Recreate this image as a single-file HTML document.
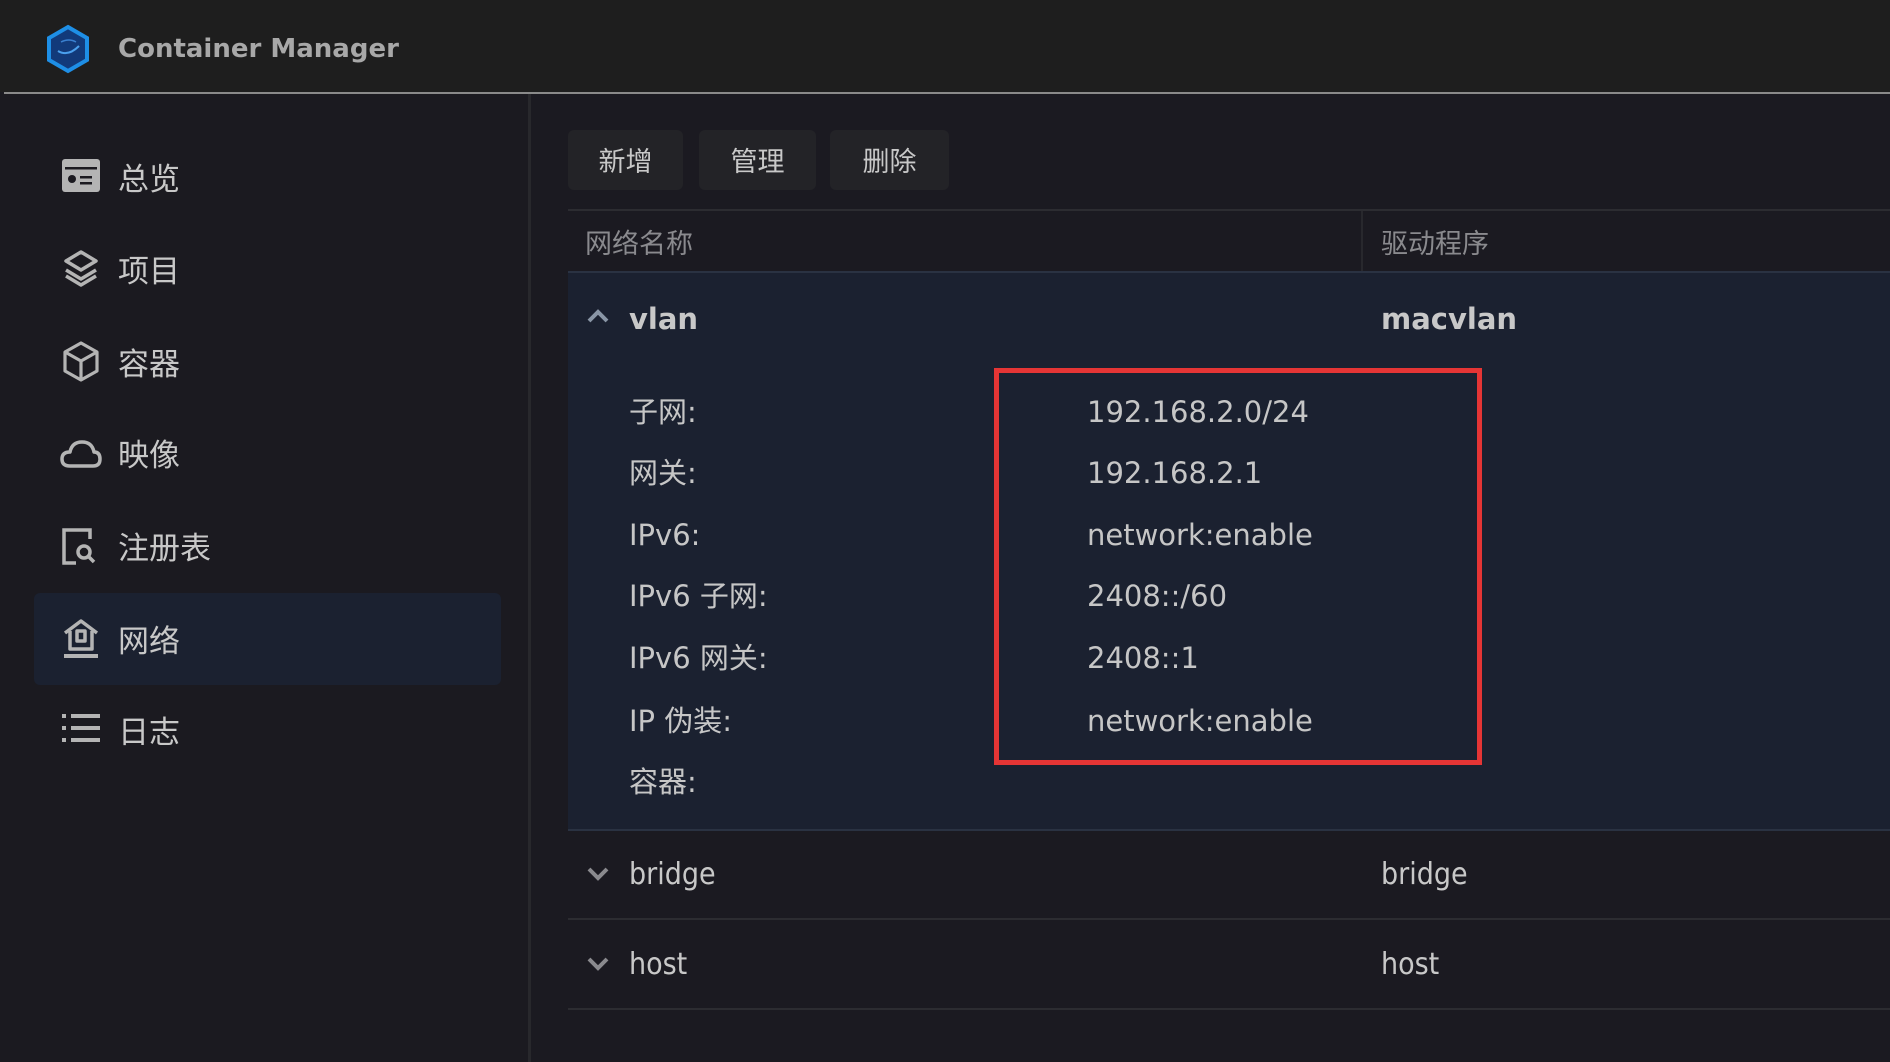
<!DOCTYPE html>
<html><head><meta charset="utf-8"><style>
*{margin:0;padding:0;box-sizing:border-box}
body{width:1890px;height:1062px;overflow:hidden;background:#1b1a21;font-family:"DejaVu Sans","Liberation Sans","Noto Sans CJK SC",sans-serif;color:#c8c8c8;position:relative}
.a{position:absolute}
.hdr{left:0;top:0;width:1890px;height:92px;background:#1e1e1e}
.hl{left:4px;top:92px;width:1886px;height:2px;background:#8a8a8a}
.sb{left:0;top:94px;width:529px;height:968px;background:#1b1a20}
.sbl{left:528px;top:94px;width:3px;height:968px;background:#28282c}
.nav{left:118px;font-size:31px;line-height:40px;height:40px;color:#c8c8c8;font-family:"Noto Sans CJK SC",sans-serif}
.ic{left:60px;width:44px;height:44px}
.btn{top:130px;height:60px;background:#232327;border-radius:6px;font-family:"Noto Sans CJK SC",sans-serif;font-size:27px;line-height:60px;text-align:center;color:#c8c8c8}
.th{font-family:"Noto Sans CJK SC",sans-serif;font-size:27px;color:#8a8a8e;top:222px;line-height:40px}
.ln{height:2px;left:568px;width:1322px}
.lab{left:629px;font-size:29px;line-height:40px;color:#c6c6c6;font-family:"DejaVu Sans","Noto Sans CJK SC",sans-serif}
.val{left:1087px;font-size:29px;line-height:40px;color:#c6c6c6}
.row{font-size:29px;line-height:40px;color:#c8c8c8}
.cr{font-size:30px;font-family:'DejaVu Sans Condensed','DejaVu Sans',sans-serif}
</style></head><body>
<div class="a hdr"></div>
<div class="a hl"></div>
<svg class="a" style="left:44px;top:24px" width="48" height="50" viewBox="0 0 48 50">
<polygon points="24,3 43,14 43,36 24,47 5,36 5,14" fill="#123a7a" stroke="#1e8fe6" stroke-width="4"/>
<path d="M14 27 Q24 33 35 22" stroke="#4aa0ee" stroke-width="2" fill="none"/>
<path d="M17 18 Q25 14 32 18" stroke="#3a80d0" stroke-width="1.5" fill="none"/>
</svg>
<div class="a" style="left:118px;top:31px;font-size:26px;font-weight:bold;color:#a8a8a8;line-height:36px">Container Manager</div>
<div class="a sb"></div>
<div class="a sbl"></div>
<div class="a" style="left:34px;top:593px;width:467px;height:92px;background:#1b2130;border-radius:6px"></div>

<svg class="a ic" style="top:155px" viewBox="0 0 44 44"><rect x="2" y="4" width="38" height="33" rx="3" fill="#b4b4b4"/><rect x="5" y="12" width="32" height="2.5" fill="#1b1a20"/><circle cx="12" cy="24" r="4" fill="#1b1a20"/><rect x="20" y="21" width="12" height="2.5" fill="#1b1a20"/><rect x="20" y="27" width="12" height="2.5" fill="#1b1a20"/></svg>
<div class="a nav" style="top:157px">总览</div>

<svg class="a ic" style="top:248px" viewBox="0 0 44 44" fill="none" stroke="#b4b4b4" stroke-width="3.5" stroke-linejoin="round"><path d="M21 4 L36 13 L21 22 L6 13 Z"/><path d="M6 22 L21 31 L36 22"/><path d="M6 28 L21 37 L36 28"/></svg>
<div class="a nav" style="top:249px">项目</div>

<svg class="a ic" style="top:340px" viewBox="0 0 44 44" fill="none" stroke="#b4b4b4" stroke-width="3.2" stroke-linejoin="round"><path d="M21 3 L37 12 L37 31 L21 40 L5 31 L5 12 Z"/><path d="M5 12 L21 21 L37 12 M21 21 L21 40"/></svg>
<div class="a nav" style="top:342px">容器</div>

<svg class="a ic" style="top:432px" viewBox="0 0 44 44" fill="none" stroke="#b4b4b4" stroke-width="3.5" stroke-linejoin="round"><path d="M10 34 Q2 34 2 27 Q2 20 10 20 Q12 10 22 10 Q32 10 34 20 Q40 20 40 27 Q40 34 33 34 Z"/></svg>
<div class="a nav" style="top:433px">映像</div>

<svg class="a ic" style="top:525px" viewBox="0 0 44 44" fill="none" stroke="#b4b4b4" stroke-width="3.5"><path d="M16 38 L4 38 L4 5 L30 5 L30 14"/><circle cx="24" cy="27" r="6"/><path d="M28 31 L34 37"/></svg>
<div class="a nav" style="top:526px">注册表</div>

<svg class="a ic" style="top:617px" viewBox="0 0 44 44" fill="none" stroke="#b4b4b4" stroke-width="3.5" stroke-linejoin="round"><path d="M5 16 L21 4 L37 16"/><path d="M10 14 L10 32 L32 32 L32 14"/><rect x="17" y="14" width="8" height="10"/><path d="M4 39 L38 39" stroke-width="4"/></svg>
<div class="a nav" style="top:619px">网络</div>

<svg class="a ic" style="top:708px" viewBox="0 0 44 44" fill="#b4b4b4"><rect x="2" y="6" width="4" height="4"/><rect x="2" y="18" width="4" height="4"/><rect x="2" y="30" width="4" height="4"/><rect x="11" y="6" width="29" height="4"/><rect x="11" y="18" width="29" height="4"/><rect x="11" y="30" width="29" height="4"/></svg>
<div class="a nav" style="top:710px">日志</div>

<div class="a btn" style="left:568px;width:115px">新增</div>
<div class="a btn" style="left:699px;width:117px">管理</div>
<div class="a btn" style="left:830px;width:119px">删除</div>

<div class="a ln" style="top:209px;background:#2c2c31"></div>
<div class="a" style="left:1361px;top:211px;width:2px;height:61px;background:#28282d"></div>
<div class="a th" style="left:585px">网络名称</div>
<div class="a th" style="left:1381px">驱动程序</div>

<div class="a" style="left:568px;top:272px;width:1322px;height:558px;background:#1b2130"></div>
<div class="a ln" style="top:271px;background:#2a3242"></div>
<svg class="a" style="left:585px;top:306px" width="26" height="20" viewBox="0 0 26 20"><path d="M4 15 L13 6 L22 15" stroke="#8a96a6" stroke-width="4" fill="none"/></svg>
<div class="a row" style="left:629px;top:299px;font-weight:bold">vlan</div>
<div class="a row" style="left:1381px;top:299px;font-weight:bold">macvlan</div>

<div class="a lab" style="top:392px">子网:</div>
<div class="a lab" style="top:453px">网关:</div>
<div class="a lab" style="top:515px">IPv6:</div>
<div class="a lab" style="top:576px">IPv6 子网:</div>
<div class="a lab" style="top:638px">IPv6 网关:</div>
<div class="a lab" style="top:701px">IP 伪装:</div>
<div class="a lab" style="top:762px">容器:</div>

<div class="a val" style="top:392px">192.168.2.0/24</div>
<div class="a val" style="top:453px">192.168.2.1</div>
<div class="a val" style="top:515px">network:enable</div>
<div class="a val" style="top:576px">2408::/60</div>
<div class="a val" style="top:638px">2408::1</div>
<div class="a val" style="top:701px">network:enable</div>

<div class="a" style="left:994px;top:368px;width:488px;height:397px;border:5px solid #e53535"></div>

<div class="a ln" style="top:829px;background:#2a3242"></div>
<svg class="a" style="left:585px;top:864px" width="26" height="20" viewBox="0 0 26 20"><path d="M4 5 L13 14 L22 5" stroke="#8a8a8e" stroke-width="4" fill="none"/></svg>
<div class="a row cr" style="left:629px;top:855px">bridge</div>
<div class="a row cr" style="left:1381px;top:855px">bridge</div>
<div class="a ln" style="top:918px;background:#2c2c31"></div>
<svg class="a" style="left:585px;top:954px" width="26" height="20" viewBox="0 0 26 20"><path d="M4 5 L13 14 L22 5" stroke="#8a8a8e" stroke-width="4" fill="none"/></svg>
<div class="a row cr" style="left:629px;top:945px">host</div>
<div class="a row cr" style="left:1381px;top:945px">host</div>
<div class="a ln" style="top:1008px;background:#2c2c31"></div>
</body></html>
